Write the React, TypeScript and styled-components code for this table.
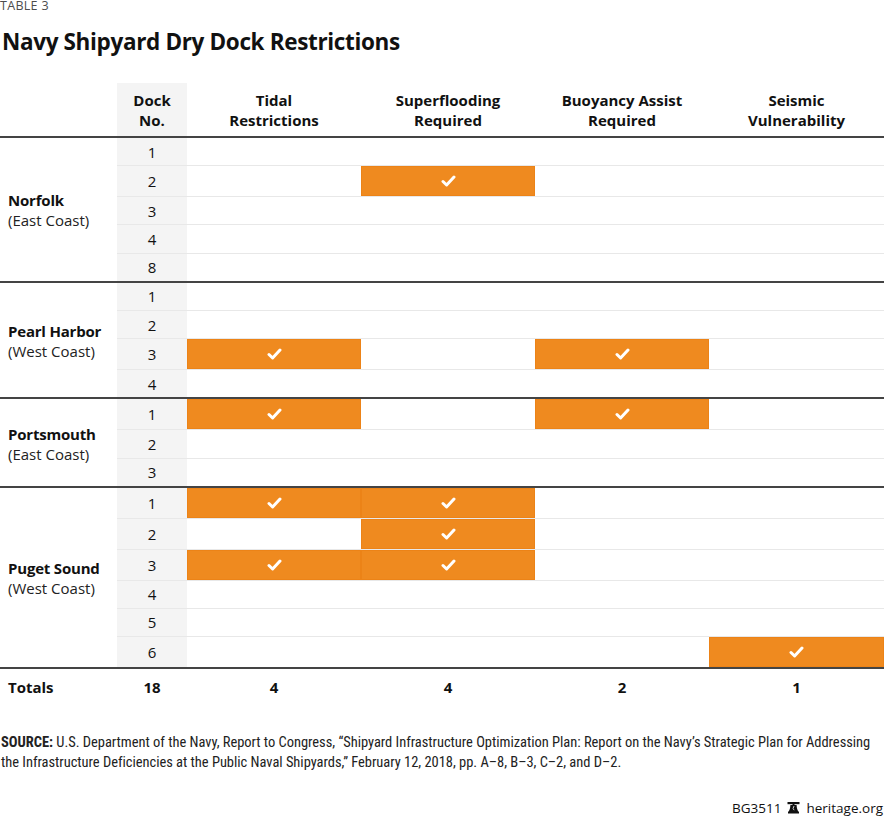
import React from "react";
import styled, { createGlobalStyle } from "styled-components";

const GlobalStyle = createGlobalStyle`
  html, body { margin: 0; padding: 0; background: #ffffff; }
  body { font-family: "Open Sans", Lato, sans-serif; color: #111111; }
`;

const Page = styled.div`
  width: 884px;
  height: 818px;
  overflow: hidden;
`;

const Kicker = styled.div`
  font-family: "Open Sans", sans-serif;
  font-size: 12.5px;
  line-height: 12px;
  letter-spacing: 0.3px;
  color: #4d4d4d;
  padding-top: 0;
`;

const Title = styled.h1`
  margin: 15px 0 26px 2px;
  font-family: "Open Sans", sans-serif;
  font-weight: 700;
  font-size: 22.5px;
  line-height: 30px;
  letter-spacing: -0.35px;
  color: #111111;
`;

const cols = "117px 70px 174px 174px 174px 175px";

const HeaderRow = styled.div`
  display: grid;
  grid-template-columns: ${cols};
  height: 53px;
  border-bottom: 2px solid #444444;
`;

const HeaderCell = styled.div<{ $shaded?: boolean }>`
  display: flex;
  align-items: center;
  justify-content: center;
  text-align: center;
  font-weight: 700;
  font-size: 15px;
  line-height: 20px;
  background: ${(p) => (p.$shaded ? "#f4f4f4" : "transparent")};
`;

const Group = styled.div`
  display: flex;
  border-bottom: 2px solid #444444;
`;

const GroupLabel = styled.div`
  width: 117px;
  flex: none;
  display: flex;
  flex-direction: column;
  justify-content: center;
  padding-left: 8px;
  padding-top: 2px;
  box-sizing: border-box;
  font-size: 15px;
  line-height: 20px;
`;

const PlaceName = styled.div`
  font-weight: 700;
  letter-spacing: -0.2px;
`;

const Coast = styled.div`
  font-weight: 400;
  color: #222222;
`;

const Rows = styled.div`
  flex: 1;
  display: flex;
  flex-direction: column;
`;

const Row = styled.div<{ $tall: boolean }>`
  display: grid;
  grid-template-columns: 70px 174px 174px 174px 175px;
  height: ${(p) => (p.$tall ? "30px" : "27.2px")};
  border-bottom: 1px solid #e8e8e8;
  &:last-child {
    border-bottom: none;
  }
`;

const DockCell = styled.div`
  background: #f4f4f4;
  display: flex;
  align-items: center;
  justify-content: center;
  font-size: 15px;
  color: #111111;
`;

const MarkCell = styled.div<{ $on: boolean }>`
  display: flex;
  align-items: center;
  justify-content: center;
  background: ${(p) => (p.$on ? "#ef8a1f" : "transparent")};
  box-shadow: ${(p) => (p.$on ? "inset 0 0 0 1px #ec8317" : "none")};
`;

const TotalsRow = styled.div`
  display: grid;
  grid-template-columns: ${cols};
  height: 35px;
  align-items: center;
  font-weight: 700;
  font-size: 15px;
`;

const TotalLabel = styled.div`
  padding-left: 8px;
`;

const TotalValue = styled.div`
  text-align: center;
`;

const Source = styled.div`
  margin-top: 29px;
  padding-left: 1px;
  font-family: "Liberation Sans Narrow", "Roboto Condensed", Roboto, sans-serif;
  font-size: 14.5px;
  line-height: 20px;
  letter-spacing: -0.03px;
  color: #222222;
`;

const SourceLine = styled.div`
  white-space: nowrap;
`;

const SourceTag = styled.span`
  font-weight: 700;
`;

const Footer = styled.div`
  margin-top: 25px;
  display: flex;
  justify-content: flex-end;
  align-items: center;
  gap: 6px;
  padding-right: 1px;
  font-family: "Open Sans", sans-serif;
  font-size: 13.5px;
  line-height: 20px;
  color: #111111;
`;

const Check = () => (
  <svg width="15" height="12" viewBox="0 0 15 12" aria-hidden="true">
    <path
      d="M2 6.5 L5.6 10 L13 2"
      fill="none"
      stroke="#ffffff"
      strokeWidth="3"
      strokeLinecap="round"
      strokeLinejoin="round"
    />
  </svg>
);

const Bell = () => (
  <svg width="13" height="12" viewBox="0 0 13 12" aria-hidden="true">
    <rect x="0.5" y="0" width="12" height="2.2" fill="#111" />
    <rect x="5.5" y="2" width="2" height="1" fill="#111" />
    <path d="M3.4 3 H9.6 C9.8 6 10.2 8.6 12 10 V11.6 H1 V10 C2.8 8.6 3.2 6 3.4 3 Z" fill="#111" />
    <path d="M7 4 L6.1 6.5 L7.1 8.2" stroke="#fff" strokeWidth="0.8" fill="none" />
  </svg>
);

type DockRow = { no: string; marks: [boolean, boolean, boolean, boolean] };
type Yard = { name: string; coast: string; rows: DockRow[] };

const F = false;
const T = true;

const yards: Yard[] = [
  {
    name: "Norfolk",
    coast: "(East Coast)",
    rows: [
      { no: "1", marks: [F, F, F, F] },
      { no: "2", marks: [F, T, F, F] },
      { no: "3", marks: [F, F, F, F] },
      { no: "4", marks: [F, F, F, F] },
      { no: "8", marks: [F, F, F, F] },
    ],
  },
  {
    name: "Pearl Harbor",
    coast: "(West Coast)",
    rows: [
      { no: "1", marks: [F, F, F, F] },
      { no: "2", marks: [F, F, F, F] },
      { no: "3", marks: [T, F, T, F] },
      { no: "4", marks: [F, F, F, F] },
    ],
  },
  {
    name: "Portsmouth",
    coast: "(East Coast)",
    rows: [
      { no: "1", marks: [T, F, T, F] },
      { no: "2", marks: [F, F, F, F] },
      { no: "3", marks: [F, F, F, F] },
    ],
  },
  {
    name: "Puget Sound",
    coast: "(West Coast)",
    rows: [
      { no: "1", marks: [T, T, F, F] },
      { no: "2", marks: [F, T, F, F] },
      { no: "3", marks: [T, T, F, F] },
      { no: "4", marks: [F, F, F, F] },
      { no: "5", marks: [F, F, F, F] },
      { no: "6", marks: [F, F, F, T] },
    ],
  },
];

export default function App() {
  return (
    <Page>
      <GlobalStyle />
      <Kicker>TABLE 3</Kicker>
      <Title>Navy Shipyard Dry Dock Restrictions</Title>
      <HeaderRow>
        <HeaderCell />
        <HeaderCell $shaded>
          Dock
          <br />
          No.
        </HeaderCell>
        <HeaderCell>
          Tidal
          <br />
          Restrictions
        </HeaderCell>
        <HeaderCell>
          Superflooding
          <br />
          Required
        </HeaderCell>
        <HeaderCell>
          Buoyancy Assist
          <br />
          Required
        </HeaderCell>
        <HeaderCell>
          Seismic
          <br />
          Vulnerability
        </HeaderCell>
      </HeaderRow>
      {yards.map((y) => (
        <Group key={y.name}>
          <GroupLabel>
            <PlaceName>{y.name}</PlaceName>
            <Coast>{y.coast}</Coast>
          </GroupLabel>
          <Rows>
            {y.rows.map((r) => (
              <Row key={r.no} $tall={r.marks.some(Boolean)}>
                <DockCell>{r.no}</DockCell>
                {r.marks.map((m, i) => (
                  <MarkCell key={i} $on={m}>
                    {m && <Check />}
                  </MarkCell>
                ))}
              </Row>
            ))}
          </Rows>
        </Group>
      ))}
      <TotalsRow>
        <TotalLabel>Totals</TotalLabel>
        <TotalValue>18</TotalValue>
        <TotalValue>4</TotalValue>
        <TotalValue>4</TotalValue>
        <TotalValue>2</TotalValue>
        <TotalValue>1</TotalValue>
      </TotalsRow>
      <Source>
        <SourceLine>
          <SourceTag>SOURCE:</SourceTag> U.S. Department of the Navy, Report to Congress, “Shipyard
          Infrastructure Optimization Plan: Report on the Navy’s Strategic Plan for Addressing
        </SourceLine>
        <SourceLine>
          the Infrastructure Deficiencies at the Public Naval Shipyards,” February 12, 2018, pp.
          A–8, B–3, C–2, and D–2.
        </SourceLine>
      </Source>
      <Footer>
        <span>BG3511</span>
        <Bell />
        <span>heritage.org</span>
      </Footer>
    </Page>
  );
}
